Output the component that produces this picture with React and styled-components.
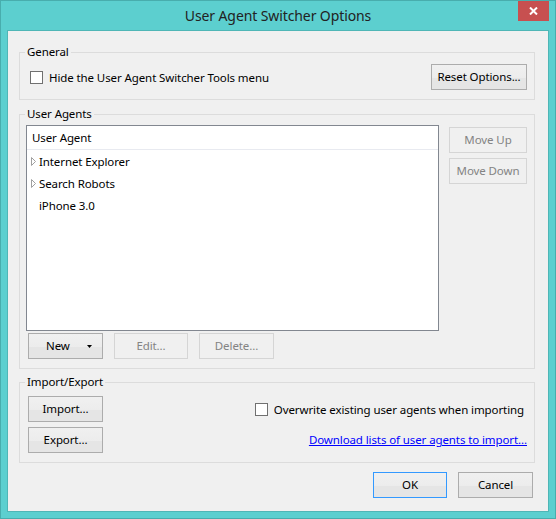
import React from "react";
import styled, { createGlobalStyle } from "styled-components";

const GlobalStyle = createGlobalStyle`
  html, body {
    margin: 0;
    padding: 0;
    background: #5ccfcf;
  }
  * {
    box-sizing: border-box;
  }
`

const Window = styled.div`
  width: 556px;
  height: 519px;
  background: #5ccfcf;
  border: 1px solid #48adad;
  display: flex;
  flex-direction: column;
  font-family: "Segoe UI", "Noto Sans", sans-serif;
  font-size: 11.5px;
  letter-spacing: -0.1px;
  color: #000;
`
const TitleBar = styled.div`
  height: 29px;
  padding: 0 6px;
  display: grid;
  grid-template-columns: 1fr auto 1fr;
  align-items: center;
`
const Title = styled.div`
  font-size: 14px;
  color: #222;
  line-height: 20px;
  margin-top: 1px;
`
const CloseButton = styled.div`
  justify-self: end;
  align-self: start;
  width: 31px;
  height: 20px;
  background: #c75050;
  display: flex;
  align-items: center;
  justify-content: center;
`
const Client = styled.div`
  flex: 1;
  margin: 0 6px 6px;
  background: #f0f0f0;
  border: 1px solid #4fb6b6;
  display: flex;
  flex-direction: column;
`
const Group = styled.fieldset`
  margin: ${p => p.$top}px 13px 0 11px;
  padding: 0;
  border: 1px solid #dcdcdc;
  min-width: 0;
`
const Legend = styled.legend`
  margin-left: 5px;
  padding: 0 2px;
  line-height: 16px;
`
const GeneralRow = styled.div`
  display: flex;
  align-items: center;
  justify-content: space-between;
  padding: 4px 7px 9px 10px;
`
const CheckRow = styled.label`
  display: flex;
  align-items: center;
  gap: 6px;
  line-height: 16px;
`
const CheckText = styled.span`
  padding-top: 1px;
`
const Box = styled.span`
  width: 13px;
  height: 13px;
  border: 1px solid #707070;
  background: #fff;
  flex: none;
`
const Button = styled.div`
  width: ${p => p.$w}px;
  height: 26px;
  border: 1px solid ${p => (p.$default ? "#3399ff" : p.$disabled ? "#d5d5d5" : "#acacac")};
  background: ${p =>
    p.$disabled
      ? "#f0f0f0"
      : "linear-gradient(to bottom, #f0f0f0 0%, #ececec 55%, #e5e5e5 56%, #e5e5e5 100%)"};
  color: ${p => (p.$disabled ? "#838383" : "#000")};
  display: flex;
  align-items: center;
  justify-content: center;
  line-height: 16px;
  flex: none;
`
const SplitButton = styled(Button)`
  justify-content: space-between;
  padding: 0 10px 0 17px;
`
const AgentsBody = styled.div`
  display: flex;
  padding: 3px 7px 9px 6px;
`
const LeftCol = styled.div`
  flex: 1;
  display: flex;
  flex-direction: column;
  gap: 2px;
`
const ListBox = styled.div`
  height: 206px;
  background: #fff;
  border: 1px solid #828790;
`
const ListHeader = styled.div`
  height: 24px;
  padding-left: 5px;
  border-bottom: 1px solid #e8eaf0;
  display: flex;
  align-items: center;
  line-height: 16px;
`
const ListItem = styled.div`
  height: 22px;
  padding: 1px 0 0 4px;
  display: flex;
  align-items: center;
  gap: 3px;
  line-height: 16px;
`
const Expander = styled.span`
  width: 5px;
  height: 9px;
  display: flex;
`
const ButtonRow = styled.div`
  display: flex;
  gap: 11px;
  padding-left: 2px;
`
const RightCol = styled.div`
  margin-left: 10px;
  padding-top: 2px;
  display: flex;
  flex-direction: column;
  gap: 5px;
`
const IOGrid = styled.div`
  display: grid;
  grid-template-columns: auto 1fr;
  row-gap: 5px;
  padding: 6px 7px 9px 8px;
`
const RightCell = styled.div`
  justify-self: end;
  align-self: center;
  margin-right: ${p => p.$inset || 0}px;
`
const Link = styled.a`
  color: #0000ff;
  text-decoration: underline;
  line-height: 16px;
  cursor: pointer;
`
const Footer = styled.div`
  display: flex;
  justify-content: flex-end;
  gap: 11px;
  padding: 9px 15px 0 0;
`

const Triangle = () => (
  <Expander>
    <svg width="5" height="9" viewBox="0 0 5 9">
      <path d="M0.5 0.5 L4.5 4.5 L0.5 8.5 Z" fill="none" stroke="#a0a0a0" />
    </svg>
  </Expander>
)

const App = () => {
  return (
    <>
      <GlobalStyle />
      <Window>
        <TitleBar>
          <span />
          <Title>User Agent Switcher Options</Title>
          <CloseButton>
            <svg width="9" height="8" viewBox="0 0 9 8">
              <path d="M1 0.5 L8 7.5 M8 0.5 L1 7.5" stroke="#fff" strokeWidth="2" />
            </svg>
          </CloseButton>
        </TitleBar>
        <Client>
          <Group $top={13}>
            <Legend>General</Legend>
            <GeneralRow>
              <CheckRow>
                <Box />
                <CheckText>Hide the User Agent Switcher Tools menu</CheckText>
              </CheckRow>
              <Button $w={96}>Reset Options...</Button>
            </GeneralRow>
          </Group>

          <Group $top={6}>
            <Legend>User Agents</Legend>
            <AgentsBody>
              <LeftCol>
                <ListBox>
                  <ListHeader>User Agent</ListHeader>
                  <ListItem><Triangle />Internet Explorer</ListItem>
                  <ListItem><Triangle />Search Robots</ListItem>
                  <ListItem><Expander />iPhone 3.0</ListItem>
                </ListBox>
                <ButtonRow>
                  <SplitButton $w={75}>
                    New
                    <svg width="5" height="3" viewBox="0 0 5 3">
                      <path d="M0 0 L5 0 L2.5 3 Z" fill="#000" />
                    </svg>
                  </SplitButton>
                  <Button $w={74} $disabled>Edit...</Button>
                  <Button $w={75} $disabled>Delete...</Button>
                </ButtonRow>
              </LeftCol>
              <RightCol>
                <Button $w={78} $disabled>Move Up</Button>
                <Button $w={78} $disabled>Move Down</Button>
              </RightCol>
            </AgentsBody>
          </Group>

          <Group $top={5}>
            <Legend>Import/Export</Legend>
            <IOGrid>
              <Button $w={75}>Import...</Button>
              <RightCell $inset={3}>
                <CheckRow>
                  <Box />
                  <CheckText>Overwrite existing user agents when importing</CheckText>
                </CheckRow>
              </RightCell>
              <Button $w={75}>Export...</Button>
              <RightCell>
                <Link>Download lists of user agents to import...</Link>
              </RightCell>
            </IOGrid>
          </Group>

          <Footer>
            <Button $w={74} $default>OK</Button>
            <Button $w={75}>Cancel</Button>
          </Footer>
        </Client>
      </Window>
    </>
  );
};
export default App;
